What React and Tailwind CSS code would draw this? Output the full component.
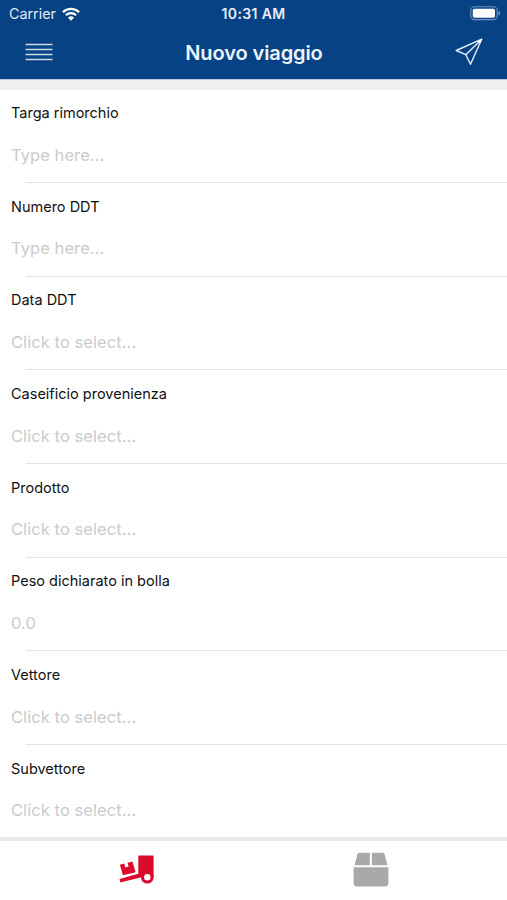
const fields = [
  { label: 'Targa rimorchio', placeholder: 'Type here...' },
  { label: 'Numero DDT', placeholder: 'Type here...' },
  { label: 'Data DDT', placeholder: 'Click to select...' },
  { label: 'Caseificio provenienza', placeholder: 'Click to select...' },
  { label: 'Prodotto', placeholder: 'Click to select...' },
  { label: 'Peso dichiarato in bolla', placeholder: '0.0' },
  { label: 'Vettore', placeholder: 'Click to select...' },
  { label: 'Subvettore', placeholder: 'Click to select...' },
];

function WifiIcon() {
  return (
    <svg width="18" height="14" viewBox="0 0 18 14" fill="none" stroke="white" strokeWidth="2.3" aria-hidden="true">
      <path d="M0.9 5.2a11.6 11.6 0 0 1 16.2 0" />
      <path d="M3.9 8.3a7.3 7.3 0 0 1 10.2 0" />
      <path d="M9 13.7 6 10.8a4.3 4.3 0 0 1 6 0z" fill="white" stroke="none" />
    </svg>
  );
}

function BatteryIcon() {
  return (
    <svg width="31" height="15" viewBox="0 0 31 15" aria-hidden="true">
      <rect x="0.8" y="0.8" width="26.4" height="12.8" rx="3.6" fill="none" stroke="#6f90ba" strokeWidth="1.1" />
      <rect x="2.8" y="2.7" width="22.2" height="9" rx="1.6" fill="white" />
      <path d="M28.5 5c1 .5 1.6 1.3 1.6 2.2s-.6 1.7-1.6 2.2z" fill="#7f9fc4" />
    </svg>
  );
}

function MenuIcon() {
  return (
    <svg width="28" height="18" viewBox="0 0 28 18" stroke="#c9d8e9" strokeWidth="1.6" aria-hidden="true">
      <path d="M0.5 1.5h27M0.5 6.5h27M0.5 11.5h27M0.5 16.5h27" />
    </svg>
  );
}

function SendIcon() {
  return (
    <svg width="28" height="28" viewBox="0 0 28 28" fill="none" stroke="#e6eef7" strokeWidth="1.4" strokeLinejoin="round" aria-hidden="true">
      <path d="M26.7 1.2 1.2 12.5l9.6 4.2 4.7 9.5z" />
      <path d="M26.7 1.2 10.8 16.7" />
      <path d="M26.7 1.2 22.5 3.2l2.3 2.2z" fill="white" stroke="none" />
    </svg>
  );
}

function HandTruckIcon() {
  return (
    <svg width="36" height="30" viewBox="0 0 36 30" fill="#dc0a2d" aria-hidden="true">
      <path d="M0.9 9.8 5.3 8.6l1 3.8 3.3-.9-1-3.8 4.9-1.2 3.1 10.8L3.9 20.3z" />
      <path d="M19.3 1.5a1 1 0 0 1 1-1h13.3a1 1 0 0 1 1 1v20.800h-7l-3 2.700-5.300-5z" />
      <path d="M0.6 24 19.3 18.8l4.500 1.200-.5 2L1.400 27.600z" />
      <circle cx="28.3" cy="22.3" r="6.3" />
      <circle cx="28.3" cy="22.3" r="3.2" fill="white" />
    </svg>
  );
}

function BoxIcon() {
  return (
    <svg width="36" height="36" viewBox="0 0 36 36" fill="#a9a9a9" aria-hidden="true">
      <path d="M6.5 0.7h10.300v12.600H1.500L4.300 2.400C4.600 1.300 5.400.7 6.500.7z" />
      <path d="M18.9 0.7h10.600c1.100 0 1.900.6 2.200 1.700l2.800 10.900H18.900z" />
      <path d="M0.6 15.2h34.800V31a3.600 3.600 0 0 1-3.600 3.600H4.200A3.600 3.600 0 0 1 .6 31z" />
    </svg>
  );
}

function Field({ label, placeholder }) {
  return (
    <label className="block h-[93.7px] shrink-0">
      <span className="block h-[44px] pt-[13px] pl-[11px] text-[14.5px] leading-[20px] text-[#111111]">
        {label}
      </span>
      <input
        type="text"
        placeholder={placeholder}
        className="block h-[41px] w-full pl-[11px] text-[16.5px] tracking-[0.07px] outline-none placeholder:text-[#cbcbcd]"
      />
      <span className="mt-[7px] ml-[26px] block h-px bg-[#e3e3e4]" />
    </label>
  );
}

export default function App() {
  return (
    <div className="flex h-[900px] w-[507px] flex-col overflow-hidden bg-white font-['Inter','Liberation_Sans',sans-serif]">
      <header className="h-[79px] shrink-0 bg-[#074384] text-white">
        <div className="grid h-[27px] grid-cols-[1fr_120px_1fr] items-center pr-[6px] pl-[9px]">
          <div className="flex items-center gap-[6px] text-[14.3px] text-[#e0e9f3]">
            Carrier
            <WifiIcon />
          </div>
          <div className="pr-[3px] text-center text-[14px] font-semibold tracking-[0.35px] whitespace-nowrap text-[#e6eef7]">
            10:31 AM
          </div>
          <div className="flex justify-end">
            <BatteryIcon />
          </div>
        </div>
        <div className="grid h-[51px] grid-cols-[80px_1fr_80px] items-center">
          <button type="button" aria-label="Menu" className="pb-[2px] pl-[25px]">
            <MenuIcon />
          </button>
          <h1 className="pl-px text-center text-[20px] font-semibold tracking-[-0.1px] text-[#edf3fa]">Nuovo viaggio</h1>
          <button type="button" aria-label="Invia" className="flex justify-end pr-[24px] pb-px">
            <SendIcon />
          </button>
        </div>
      </header>

      <div className="h-[11px] shrink-0 border-t border-[#b5c7dc] bg-[#efeff1]" />

      <main className="flex min-h-0 flex-1 flex-col overflow-hidden">
        {fields.map((field) => (
          <Field key={field.label} {...field} />
        ))}
      </main>

      <nav className="grid h-[63px] shrink-0 grid-cols-[273px_1fr] border-t-4 border-[#e9e9e9] bg-white">
        <button type="button" aria-label="Viaggi" className="flex justify-center pt-[14px]">
          <HandTruckIcon />
        </button>
        <button type="button" aria-label="Prodotti" className="flex pt-[11px] pl-[80px]">
          <BoxIcon />
        </button>
      </nav>
    </div>
  );
}
